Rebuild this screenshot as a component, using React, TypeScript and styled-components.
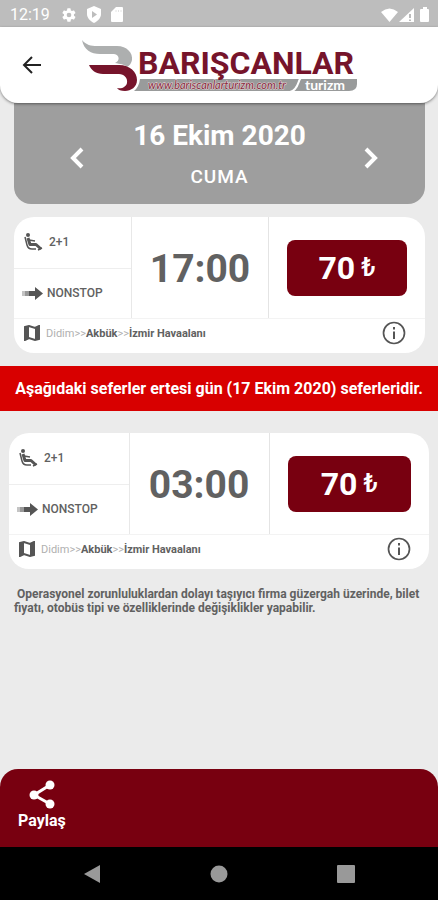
import React from "react";
import styled, { createGlobalStyle } from "styled-components";

const GlobalStyle = createGlobalStyle`
  * { box-sizing: border-box; }
  body {
    margin: 0;
    background: #ebebeb;
    font-family: Roboto, "Liberation Sans", sans-serif;
    color: #616161;
  }
  button { font-family: inherit; color: inherit; border: 0; padding: 0; background: none; cursor: pointer; }
  h1, p { margin: 0; }
  svg { display: block; flex: none; }
`;

const Screen = styled.div`
  min-height: 100vh;
  display: flex;
  flex-direction: column;
`;

const StatusBar = styled.div`
  display: flex;
  align-items: center;
  height: 27px;
  padding: 2px 7px 0 10px;
  background: #bdbdbd;
  color: #fff;
  font-size: 16px;
`;

const StatusIcons = styled.div<{ $end?: boolean }>`
  display: flex;
  align-items: center;
  gap: ${(p) => (p.$end ? 1 : 9)}px;
  margin-left: ${(p) => (p.$end ? "auto" : "11px")};
`;

const Header = styled.header`
  position: relative;
  display: grid;
  grid-template-columns: 64px 1fr 64px;
  align-items: center;
  height: 76px;
  background: #fff;
  border-radius: 0 0 18px 18px;
  box-shadow: 0 1px 3px rgba(0, 0, 0, 0.45);
`;

const BackButton = styled.button`
  justify-self: center;
  color: #222;
`;

const LogoSlot = styled.div`
  display: flex;
  justify-content: center;
`;

const DatePanel = styled.section`
  display: grid;
  grid-template-columns: 32px 1fr 32px;
  align-items: center;
  height: 101px;
  margin: 0 13px 0 14px;
  padding: 8px 41px 0;
  background: #9e9e9e;
  border-radius: 0 0 17px 17px;
  color: #fff;
  text-align: center;
`;

const DateTitle = styled.h1`
  font-size: 28px;
  line-height: 32px;
  font-weight: 700;
`;

const DayName = styled.p`
  margin-top: 14px;
  padding-bottom: 8px;
  font-size: 19px;
  line-height: 22px;
  font-weight: 500;
  letter-spacing: 1px;
`;

const Card = styled.article<{ $wide?: boolean }>`
  margin: ${(p) => (p.$wide ? "22px 9px 0" : "13px 13px 0 14px")};
  background: #fff;
  border-radius: 20px;
  overflow: hidden;
`;

const CardTop = styled.div`
  display: grid;
  grid-template-columns: minmax(0, 118fr) minmax(0, 137fr) minmax(0, 156fr);
  height: 102px;
  border-bottom: 1px solid #f3f3f3;
`;

const Features = styled.div`
  display: grid;
  grid-template-rows: 1fr 1fr;
  border-right: 1px solid #e8e8e8;
`;

const Feature = styled.div<{ $tight?: boolean }>`
  display: flex;
  align-items: center;
  gap: ${(p) => (p.$tight ? 4 : 6)}px;
  padding-left: ${(p) => (p.$tight ? 8 : 9)}px;
  font-size: 12px;
  font-weight: 500;
  & + & { border-top: 1px solid #eee; }
`;

const Time = styled.div`
  display: flex;
  align-items: center;
  justify-content: center;
  padding-top: 2px;
  border-right: 1px solid #e4e4e4;
  font-size: 39px;
  font-weight: 700;
`;

const PriceCell = styled.div`
  display: flex;
  align-items: center;
  padding: 0 18px;
`;

const PriceButton = styled.button`
  display: flex;
  align-items: center;
  justify-content: center;
  gap: 6px;
  width: 100%;
  height: 56px;
  border-radius: 8px;
  background: #780010;
  color: #fff;
  font-size: 32px;
  font-weight: 700;
`;

const Lira = styled.span`
  font-size: 25px;
  font-weight: 500;
`;

const RouteRow = styled.div<{ $wide?: boolean }>`
  display: flex;
  align-items: center;
  height: 34px;
  padding: 0 ${(p) => (p.$wide ? 18 : 19)}px 6px 10px;
  gap: 6px;
`;

const Route = styled.p`
  flex: 1;
  font-size: 11px;
  color: #b0b0b0;
  white-space: nowrap;
`;

const Stop = styled.strong`
  font-weight: 700;
  color: #616161;
`;

const InfoButton = styled.button`
  color: #555;
`;

const Banner = styled.p`
  margin-top: 13px;
  height: 45px;
  line-height: 46px;
  background: #d80000;
  color: #fff;
  font-size: 16px;
  font-weight: 700;
  text-align: center;
  white-space: nowrap;
`;

const Notice = styled.p`
  margin: 18px 14px 0;
  font-size: 12px;
  line-height: 14px;
  font-weight: 700;
  text-indent: 3px;
`;

const Footer = styled.footer`
  margin-top: auto;
  height: 78px;
  padding: 11px 18px;
  background: #780010;
  border-radius: 18px 18px 0 0;
`;

const ShareButton = styled.button`
  display: flex;
  flex-direction: column;
  align-items: center;
  gap: 2px;
  color: #fff;
  font-size: 16px;
  line-height: 20px;
  font-weight: 700;
`;

const SystemNav = styled.nav`
  display: flex;
  justify-content: space-between;
  align-items: center;
  height: 53px;
  padding: 0 83px;
  background: #000;
  color: #999;
`;

const Logo = () => (
  <svg width="278" height="56" viewBox="80 37 278 56" role="img" aria-label="Barışcanlar Turizm">
    <path d="M82 40C86 45 91 46 97 46H117C127 46 133 53 132 60Q131 65 127 67C124 64 120 64 115 63C120 61 120 55 114 54H100C91 54 84 50 82 40Z" fill="#adafaf" />
    <path d="M89 65H119C130 65 137 72 137 80C137 87 131 91 125 91C121 91 118 90 117 88C122 89 126 87 127 83C128 78 124 74 119 74H103C96 74 91 70 89 65Z" fill="#76142b" />
    <path d="M140 79H357V84Q357 91 349 91H134Q139 87 140 79Z" fill="#999b9b" />
    <path d="M301 78C298 79 299 90 290 92" fill="none" stroke="#fff" strokeWidth="2" />
    <text x="138" y="74" fontFamily="Roboto, sans-serif" fontSize="32" fontWeight="700" fill="#76142b">BARIŞCANLAR</text>
    <text x="148" y="89" fontFamily="Lato, sans-serif" fontSize="11" fontStyle="italic" fontWeight="400" fill="#86283a" stroke="#e6d8da" strokeWidth="1" paintOrder="stroke">www.bariscanlarturizm.com.tr</text>
    <text x="305" y="90" fontFamily="Lato, sans-serif" fontSize="14" fontWeight="700" fill="#fff">turizm</text>
  </svg>
);

const Gear = () => (
  <svg width="16" height="16" viewBox="0 0 24 24" fill="currentColor">
    <path d="M19.4 13a7.500 7.500 0 0 0 0-2l2.100-1.600a.5.5 0 0 0 .1-.6l-2-3.500a.5.5 0 0 0-.6-.2l-2.500 1a7 7 0 0 0-1.700-1l-.4-2.600a.5.5 0 0 0-.5-.5h-4a.5.5 0 0 0-.5.5L9 5.100a7 7 0 0 0-1.700 1l-2.500-1a.5.5 0 0 0-.6.2l-2 3.500a.5.5 0 0 0 .1.6L4.500 11a8 8 0 0 0 0 2l-2.200 1.600a.5.5 0 0 0-.1.600l2 3.500a.5.5 0 0 0 .6.200l2.500-1a7 7 0 0 0 1.700 1l.4 2.600c0 .3.2.5.5.5h4c.3 0 .5-.2.5-.5l.4-2.600a7 7 0 0 0 1.700-1l2.500 1a.5.5 0 0 0 .6-.2l2-3.500a.5.5 0 0 0-.1-.6ZM12 15.500a3.500 3.500 0 1 1 0-7 3.500 3.500 0 0 1 0 7Z" />
  </svg>
);

const Shield = () => (
  <svg width="16" height="17" viewBox="0 0 16 17">
    <path d="M8 0 15 3V8C15 12 12 15 8 17 4 15 1 12 1 8V3Z" fill="#fff" />
    <path d="m6 5 5 3.500L6 12Z" fill="#bdbdbd" />
  </svg>
);

const SdCard = () => (
  <svg width="13" height="15" viewBox="0 0 13 15">
    <path d="M5 0H11Q12 0 12 1V14Q12 15 11 15H1Q0 15 0 14V5Z" fill="#fff" />
    <path d="M5 3V5M7.500 3V5M10 3V5" stroke="#e4e4e4" />
  </svg>
);

const Wifi = () => (
  <svg width="17" height="14" viewBox="0 0 17 14">
    <path d="M0 4Q8.500-3 17 4L8.500 14Z" fill="#fff" />
  </svg>
);

const Signal = () => (
  <svg width="15" height="14" viewBox="0 0 15 14">
    <path d="M15 0V14H0Z" fill="#fff" />
    <path d="M11 6V10M11 11.500V13" stroke="#bbb" strokeWidth="2" />
  </svg>
);

const Battery = () => (
  <svg width="16" height="15" viewBox="0 0 16 15">
    <path d="M8 0H12V2H13Q14 2 14 3V14Q14 15 13 15H6Q5 15 5 14V3Q5 2 6 2H8Z" fill="#fff" />
  </svg>
);

const BackArrow = () => (
  <svg width="20" height="20" viewBox="0 0 20 20" fill="none" stroke="currentColor" strokeWidth="2">
    <path d="M10 2 2 10 10 18M2 10H19" />
  </svg>
);

const Chevron = ({ next }: { next?: boolean }) => (
  <svg width="32" height="32" viewBox="0 0 32 32" fill="none" stroke="currentColor" strokeWidth="4">
    <path d={next ? "M14 7 23 16 14 25" : "M27 7 18 16 27 25"} />
  </svg>
);

const Seat = () => (
  <svg width="20" height="20" viewBox="0 0 20 20" fill="none" stroke="#555">
    <circle cx="5" cy="3" r="2" fill="#555" stroke="none" />
    <path d="M2 5 4 13Q5 17 9 17H13" strokeWidth="1.500" />
    <path d="M5 6 7 12.500H13L18 17" strokeWidth="3" strokeLinejoin="round" />
    <path d="M6 8 12 9M15 18 19 16" strokeWidth="1.500" />
  </svg>
);

const ArrowRight = () => (
  <svg width="21" height="13" viewBox="0 0 21 13">
    <path d="M0 4H3V9H0Z" fill="#c4c4c4" />
    <path d="M3 4H7V9H3Z" fill="#999" />
    <path d="M7 4H13V0L21 6.500 13 13V9H7Z" fill="#555" />
  </svg>
);

const MapIcon = () => (
  <svg width="16" height="16" viewBox="0 0 16 16">
    <path d="M1 2 5 1 11 3 15 1V14L11 15 5 13 1 15Z" fill="#fff" stroke="#555" strokeWidth="2" />
    <path d="M1 2 5 1V13L1 15ZM11 3 15 1V14L11 15Z" fill="#555" />
  </svg>
);

const Info = () => (
  <svg width="24" height="24" viewBox="0 0 24 24">
    <circle cx="12" cy="12" r="10.500" fill="none" stroke="currentColor" strokeWidth="1.700" />
    <path d="M12 6V8.500M12 10.500V18" stroke="currentColor" strokeWidth="2" />
  </svg>
);

const Share = () => (
  <svg width="26" height="29" viewBox="0 0 26 29" fill="currentColor">
    <path d="M21 5 5 15 21 24" fill="none" stroke="currentColor" strokeWidth="3" />
    <circle cx="21" cy="5" r="4.500" />
    <circle cx="5" cy="15" r="4.500" />
    <circle cx="21" cy="24" r="4.500" />
  </svg>
);

type Trip = { time: string; price: string; wide?: boolean };

const TripCard = ({ time, price, wide }: Trip) => (
  <Card $wide={wide}>
    <CardTop>
      <Features>
        <Feature><Seat />2+1</Feature>
        <Feature $tight><ArrowRight />NONSTOP</Feature>
      </Features>
      <Time>{time}</Time>
      <PriceCell>
        <PriceButton>{price}<Lira>₺</Lira></PriceButton>
      </PriceCell>
    </CardTop>
    <RouteRow $wide={wide}>
      <MapIcon />
      <Route>Didim&gt;&gt;<Stop>Akbük</Stop>&gt;&gt;<Stop>İzmir Havaalanı</Stop></Route>
      <InfoButton aria-label="Sefer bilgisi"><Info /></InfoButton>
    </RouteRow>
  </Card>
);

export default function App() {
  return (
    <Screen>
      <GlobalStyle />
      <StatusBar>
        12:19
        <StatusIcons><Gear /><Shield /><SdCard /></StatusIcons>
        <StatusIcons $end><Wifi /><Signal /><Battery /></StatusIcons>
      </StatusBar>
      <Header>
        <BackButton aria-label="Geri"><BackArrow /></BackButton>
        <LogoSlot><Logo /></LogoSlot>
      </Header>
      <DatePanel>
        <button aria-label="Önceki gün"><Chevron /></button>
        <div>
          <DateTitle>16 Ekim 2020</DateTitle>
          <DayName>CUMA</DayName>
        </div>
        <button aria-label="Sonraki gün"><Chevron next /></button>
      </DatePanel>
      <TripCard time="17:00" price="70" />
      <Banner>Aşağıdaki seferler ertesi gün (17 Ekim 2020) seferleridir.</Banner>
      <TripCard time="03:00" price="70" wide />
      <Notice>Operasyonel zorunluluklardan dolayı taşıyıcı firma güzergah üzerinde, bilet fiyatı, otobüs tipi ve özelliklerinde değişiklikler yapabilir.</Notice>
      <Footer>
        <ShareButton><Share />Paylaş</ShareButton>
      </Footer>
      <SystemNav>
        <button aria-label="Geri">
          <svg width="18" height="20" viewBox="0 0 18 20"><path d="M17 1V19L1 10Z" fill="#999" /></svg>
        </button>
        <button aria-label="Ana ekran">
          <svg width="18" height="18" viewBox="0 0 18 18"><circle cx="9" cy="9" r="8.500" fill="#999" /></svg>
        </button>
        <button aria-label="Son uygulamalar">
          <svg width="18" height="18" viewBox="0 0 18 18"><rect width="18" height="18" rx="1" fill="#999" /></svg>
        </button>
      </SystemNav>
    </Screen>
  );
}
